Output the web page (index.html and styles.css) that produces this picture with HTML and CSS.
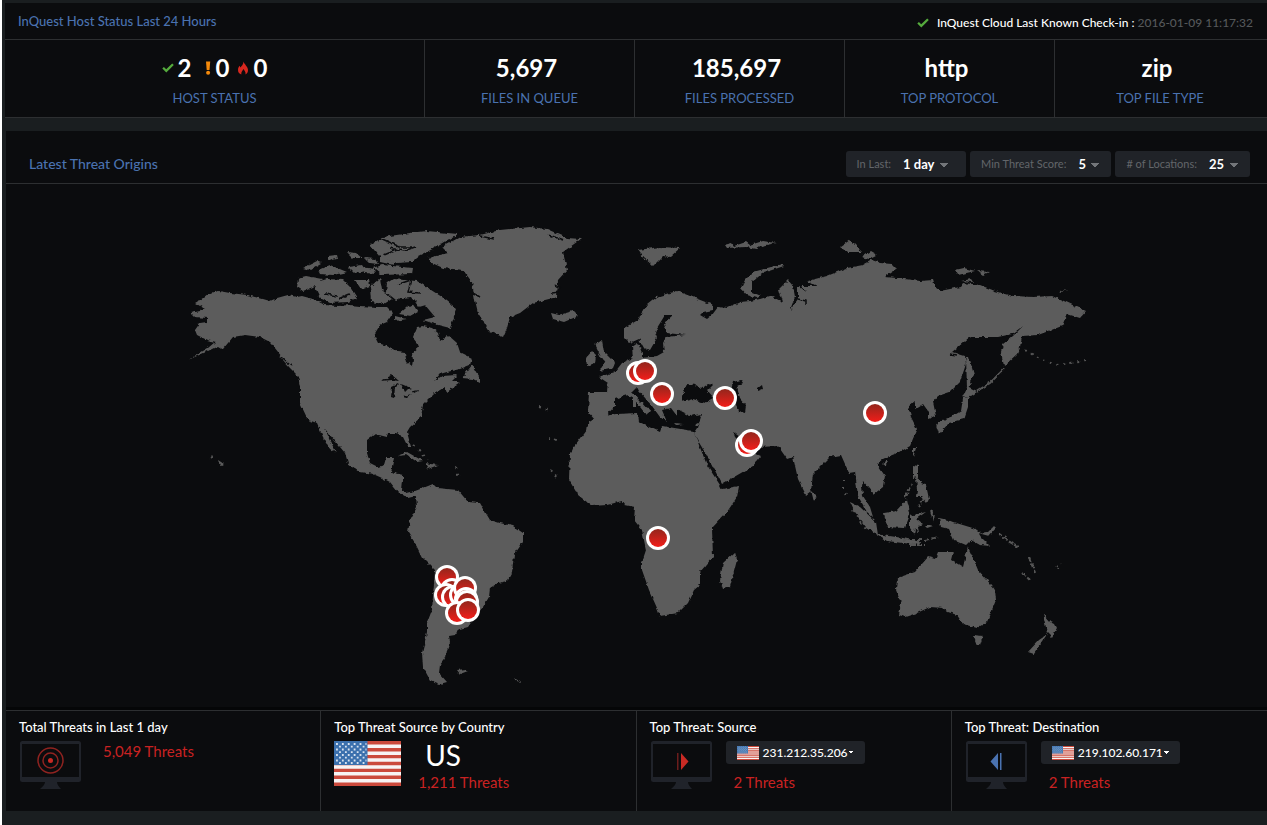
FILE: index.html
```html
<!DOCTYPE html>
<html lang="en">
<head>
<meta charset="utf-8">
<meta name="viewport" content="width=device-width, initial-scale=1">
<title>InQuest Threat Dashboard</title>
<link rel="stylesheet" href="styles.css">
</head>
<body>
<svg class="defs" width="0" height="0" aria-hidden="true">
  <defs>
    <symbol id="check" viewBox="0 0 12 10"><path d="M.3 5.6 1.9 4l2.3 2.2L10.2.4l1.6 1.5-7.5 7.6z" fill="#55ab3d"/></symbol>
    <symbol id="flag" viewBox="0 0 66 45">
      <path fill="#f7f4f4" d="M0 0h66v45H0z"/>
      <path fill="#cb4a3c" d="M0 0h66v3.5H0zM0 7h66v3.4H0zM0 13.9h66v3.4H0zM0 20.8h66v3.4H0zM0 27.7h66v3.4H0zM0 34.6h66V38H0zM0 41.5h66V45H0z"/>
      <path fill="#3b70ad" d="M0 0h33v24H0z"/>
      <path fill="none" stroke="#d7e2ef" stroke-width="1.8" stroke-dasharray="1.8 4" d="M2 3h30M2 8.500h30M2 14h30M2 19.500h30M5 5.700h26M5 11.200h26M5 16.700h26M5 22h26"/>
    </symbol>
    <symbol id="monitor" viewBox="0 0 61 49">
      <path fill="#20232a" fill-rule="evenodd" d="M2.500 0h56Q61 0 61 2.500v36q0 2.500-2.500 2.500H2.500Q0 41 0 38.500v-36Q0 0 2.500 0zM2 3v33h57V3zM25 41h12q0 3 4 7H20q5-4 5-7z"/>
    </symbol>
  </defs>
</svg>
<div class="app">
  <section class="status">
    <header class="status-head">
      <h1 class="heading heading-small">InQuest Host Status Last 24 Hours</h1>
      <p class="checkin"><svg class="checkin-icon" aria-hidden="true"><use href="#check"/></svg><span>InQuest Cloud Last Known Check-in : <time>2016-01-09 11:17:32</time></span></p>
    </header>
    <div class="stats">
      <div class="stat">
        <div class="stat-value hosts">
          <span class="host"><svg class="host-icon" viewBox="0 0 12 14" aria-hidden="true"><use href="#check" y="2" width="12" height="10"/></svg>2</span>
          <span class="host"><svg class="host-icon" viewBox="0 0 12 14" aria-hidden="true"><path fill="#f58a0b" d="M6 .5h4.200L9.500 9h-2.800z"/><circle cx="8.100" cy="11.800" r="2" fill="#f58a0b"/></svg>0</span>
          <span class="host"><svg class="host-icon" viewBox="0 0 12 14" aria-hidden="true"><path fill="#d8281f" d="M6.500.5C7 3 11 5.500 11 9c0 2.500-1.200 3.800-2.500 4.500C9 11 7.500 9.500 6.500 8 5.500 9.500 4 11 4.300 13.500 2.500 12.800 1 11.500 1 9c0-2 .8-3.200 1.700-4.200l.6 1.700C4.800 5 6.500 3 6.500.5z"/></svg>0</span>
        </div>
        <div class="stat-label">HOST STATUS</div>
      </div>
      <div class="stat"><div class="stat-value single">5,697</div><div class="stat-label">FILES IN QUEUE</div></div>
      <div class="stat"><div class="stat-value single">185,697</div><div class="stat-label">FILES PROCESSED</div></div>
      <div class="stat"><div class="stat-value single">http</div><div class="stat-label">TOP PROTOCOL</div></div>
      <div class="stat"><div class="stat-value single">zip</div><div class="stat-label">TOP FILE TYPE</div></div>
    </div>
  </section>

  <section class="origins">
    <header class="origins-head">
      <h2 class="heading">Latest Threat Origins</h2>
      <form class="filters">
        <div class="filter"><label for="period">In Last:</label><select id="period" class="pick pick-wide"><option>1 day</option></select></div>
        <div class="filter"><label for="score">Min Threat Score:</label><select id="score" class="pick"><option>5</option></select></div>
        <div class="filter"><label for="count"># of Locations:</label><select id="count" class="pick"><option>25</option></select></div>
      </form>
    </header>
    <svg class="map" viewBox="6 184 1261 523" role="img" aria-label="World map of threat origins">
      <defs>
        <linearGradient id="pin" x1="0" y1="0" x2="0" y2="1"><stop offset="0" stop-color="#93261c"/><stop offset="1" stop-color="#f21d19"/></linearGradient>
        <filter id="coast" filterUnits="userSpaceOnUse" x="180" y="220" width="920" height="475" color-interpolation-filters="sRGB">
          <feTurbulence type="fractalNoise" baseFrequency="0.22" numOctaves="2" seed="4"/>
          <feDisplacementMap in="SourceGraphic" scale="4" xChannelSelector="R" yChannelSelector="G"/>
        </filter>
        <g id="dot"><circle r="12" fill="#fff"/><circle r="9" fill="url(#pin)"/></g>
      </defs>
      <g filter="url(#coast)">
        <g fill="#5c5c5c">
          <path d="M188 360 208 348 215 342 207 340 197 335 195 330 200 323 207 322 207 318 195 317 191 313 200 311 205 309 195 303 203 298 209 293 219 291 230 293 247 295 263 299 270 301 277 298 288 295 297 297 302 296 313 299 325 305 338 306 350 305 360 306 377 307 387 307 393 313 387 322 380 325 374 335 378 343 387 346 397 352 405 353 407 362 412 366 413 360 412 353 419 347 417 342 413 337 417 327 423 326 432 328 438 333 440 341 448 335 457 343 460 352 472 358 470 365 460 369 447 372 440 374 434 381 442 376 457 375 452 380 460 383 447 392 445 387 435 393 428 400 423 405 421 417 410 427 407 432 411 447 408 447 403 437 397 433 388 433 387 437 375 434 367 440 367 453 370 463 378 467 384 465 386 458 394 458 391 472 403 475 403 480 402 490 407 493 415 491 423 488 433 484 437 488 458 490 468 502 480 503 487 515 490 520 500 523 513 526 523 533 523 542 514 555 512 572 507 581 498 583 490 588 489 597 483 607 475 617 468 627 457 630 455 635 449 636 450 642 447 650 446 657 440 665 439 673 447 682 440 684 430 680 423 667 422 653 427 633 427 623 432 610 435 570 422 557 415 543 408 532 410 520 417 507 416 496 408 498 398 492 390 482 382 478 373 474 360 472 348 463 345 453 325 429 336 453 330 449 323 437 317 423 308 420 300 403 300 387 298 376 290 368 280 357 270 342 260 337 245 335 233 337 228 343 223 349 218 346 206 352z"/>
          <path d="m313 283 14-4 16 1 7 7 7 11-10 4-17 1-10-5zM298 278l8-2 16 3-9 8-10 4-6-4zM303 268l14-7 5 2-12 7zM318 270l12-5 17 7-14 3-13-1zM328 256l8-1 1 4-9 2zM347 252l9 1 6 5-9 0zM348 267l14-2 4 6-12 2zM355 280l14 0 1 6-9 3zM365 258l10 1 3 5-8-1zM362 267l12 2 1 5-10-1z"/>
          <path d="m370 245 13-8 27-4 17-2 31 3-18 11-15 8-8 4-5 5-15 1-17-6zM374 268l8-3 31 3-1 6-30 1zM380 257l14 5 0 3-14-3zM370 287l10-9 2 12 10 9-8 5-13-2zM387 283l6-4 24 2 25 16 15 12-7 19-12-3-15-5 12-3-10-12-7 2-7-10-9 1-6 2-10-8zM395 316l12 3-12 2zM399 314l13-11 6 9-7 4z"/>
          <path d="m428 258 20-5-6-6 18-10 20-2 20-5 30-3 17 2 11 5 9 4 14 1-18 13 4 18-9 10-1 17-24 6-13 10-10 4-3 11-4 9-13-5-12-19-3-13-3-18-9-12-20-2-11-5zM551 313l8 2 14-4 5 5-14 6-11-3zM638 250l22-3 20 1-10 9-7-1-10 10-10-9zM595 345l7-5 2 12 11 11-2 5-13 3 5-8-4-6zM586 358l6-7 4 4-1 8-8 3z"/>
          <path d="m588 412 1-20 18 0 1-9-9-6 16-5 7-9 11-5-1-11 6-4 4 10 0 5 15-2 7-4-1-9 3-6 19-2-18-2-3-10 9-8-8 0-8 13-2 5 2 5-7 12-6-2-5-9-9 4-6-6 0-9 14-8 9-15 10-8 20-6 13 5 23 9 0 5-10 2-3 3 7 4 5-4 6-8 9 1 13-6 10-1 10-2 10-3 13 6-4-13 9-9 5 6 2 11-5 13 8-11 0-13 19 0-10-5 20-5 20-8 16-3 9-5 8 3 12 1 5 5-12 8 12 1 23 3 13-1 2 7 5 4 20-4 3-4 17 2 15 6 18 5 20 1 20-1 24 11 9 4-6 7-13-4-5 12-24 9-16 1-2 11-3 7-13 12-3-14 2-8 10-8 10-10-11 8-14 3-11 0-17 0-18 15 13 4 1 8-6 18-10 10-12 4-5 6 3 14-8 3 0-8-5-7-8 5 0-8-7 6 3 10 6 12-7 17-10 6-13 5-4 2-6 5 8 12-2 11-9 7-11-13-1 5 1 10 7 11 3 10-6-5-9-16-3-24-6 1-8-18-11 2-17 17-2 17-5 4-8-16-5-22-6 2-9-13-20 1-18-10-7-5 2 5 14 14 12 5-8 10-31 18-12-23-16-27 4-6 4-14-12 2-10-5-3-2 0 7-6-8-9 2 5 12-7-5-8-11-13-15-2-4-5 5 17 19-2 5-13-17-7-4-12 4 0 7-10 11-10 3z"/>
          <path d="m597 417 20-3 20-1 1 9 22 10 2-6 31 5 4 9 10 25 13 20 2 4 17-3-2 11-10 15-15 16 1 29-13 15 0 13-6 5-6 13-10 10-18 3-3-8-8-18-7-20 0-8 4-12-4-20-8-10 1-13-10-2-3-4-15 4-15 1-14-11-9-15 1-27 17-23 1-7zM735 552l2 8-7 27-7 2-3-9 3-17z"/>
          <path d="m741 288 4-8 8-8 29-8 2 2-21 7-11 9 0 10 9 4-4 2-10-3zM724 245l8-2 2 3 12-4 4 3 13-4 13 2-14 3-5 3-11-2-20 1zM840 247l10-7 12 12-15 0zM861 257l9-6 7 4-8 4zM955 270l9-2 11 3-17 4zM977 271l12 1-6 3zM961 281l10-2 2 3zM1059 291l10-1-8 2z"/>
          <path d="m966 357 3 0 5 18-4 6 1 4-4 3zM967 387l10 5-9 6-7-1 3-3zM963 398l5 0 0 9-4 12-15 4-10 11-3-9 2-3 15-6 8-5zM913 448l3 0-3 10zM883 463l5-3-1 6zM811 490l6 6-3 6zM913 465l5 1 0 11-5 1zM916 476l6 5-1 3 5 1 3 14-2 4-6-7-5 0 1-5z"/>
          <path d="m850 502 10 5 16 15 2 13-12-8-11-14zM876 534l27 4 18 4-1 3-33-4zM884 513l12-2 11-12 3 13-6 16-17-1zM910 516l16-4-10 7 6 5-4 2 1 8-4-6-1 7-4-6zM930 510l4 2-1 10zM939 518l9 2 5 2 23 7 5 8 9 9-10-1-9-5-5 5-12-5-5-11-8-2zM978 533l10-1 6-6 2 2-7 8zM925 526l8 0-6 2z"/>
          <path d="m968 547 5 11 5 12 9 10 8 10 1 10-9 22-10 6-14-4-6-9-9-3-5-4-13-1-13 6-12 4-6-2 2-12-5-13 1-12 18-6 13-15 7 2 3-7 15 0-2 8 12 7zM973 635l10 1-3 9-3 0zM1043 614l7 8 8 4-6 11-5-5zM1048 634l-14 20-6-2 11-12z"/>
          <path d="m397 456 10-4 16 9-6 1-10-7zM425 463l13 2-10 4zM462 378l10-13 7 12 0 5-6-3zM457 670l8-1 3 2-8 3zM633 395l3 0 0 12-3 0zM642 408l8 1-2 5zM674 423l9 1-7 1zM695 424l6-3-4 5zM218 460l6 4-4 2zM514 678l7 4-5-1z"/>
        </g>
        <g fill="none" stroke="#565656" stroke-width="2">
          <path d="m977 391 13-8 14-14"/>
          <path stroke-dasharray="2 5" d="m1025 350 13 8 18 7 30-4M998 533l10 8 10 6M1029 557l3 8 3 8M1023 574l7 6M1056 568l6-4M413 445l8 7 7 8M456 467l3 12M843 480l0 10 5 9M853 510l8 14 8 8M539 407l12 3M548 438l9 2M551 470l5 7M210 457l6 3"/>
          <path stroke-dasharray="5 2" d="m903 540 22 0 13-3M910 545l15 0M924 499l-6 8M905 497l4-7 3-6M998 533l12 9 8 5M1022 573l8 7M1029 557l6 16"/>
        </g>
        <g fill="#0b0c0e">
          <path d="m381 381 11-6 7 6-8-1zM391 397l1-10 8-4-5 5-1 10zM401 384l10 4-3 1-3 3zM403 396l9-2-7 4zM413 391l7-1-6 3zM682 396l5-12 8 1 6 4 7-5 4 1-5 5 7 8-9 5-12-4-11 3zM733 382l8-2 2 3-6 3 3 12 6 7-1 8-7-2-2-8-6-8zM758 388l4-3 1 4-5 2z"/>
        </g>
        <g fill="none" stroke="#0b0c0e" stroke-width="1.500">
          <path d="m380 238 20 9 12 0M390 248l14 3 11-4M384 255l12-5M399 284l12-4-3 12 12 1M400 298l9 8 7-4M325 294l12 2M338 299l12-5M563 240l-14-5M480 236l14 3M555 285l6 4M552 293l8-1M471 292l9 5M270 343l11 14 10 9M800 286l6 5M798 299l8 2 0 4M950 354l7 1"/>
        </g>
      </g>
      <g>
        <use href="#dot" x="638" y="373"/><use href="#dot" x="645" y="371"/><use href="#dot" x="662" y="394"/><use href="#dot" x="725" y="398"/>
        <use href="#dot" x="747" y="445"/><use href="#dot" x="751" y="441"/><use href="#dot" x="875" y="413"/><use href="#dot" x="658" y="538"/>
        <use href="#dot" x="447" y="577"/><use href="#dot" x="452" y="590"/><use href="#dot" x="446" y="595"/><use href="#dot" x="453" y="597"/>
        <use href="#dot" x="461" y="595"/><use href="#dot" x="465" y="588"/><use href="#dot" x="466" y="599"/><use href="#dot" x="467" y="602"/><use href="#dot" x="457" y="613"/><use href="#dot" x="468" y="610"/>
      </g>
    </svg>
    <div class="tiles">
      <article class="tile">
        <h3 class="tile-title">Total Threats in Last 1 day</h3>
        <div class="tile-body">
          <svg class="tile-icon" viewBox="0 0 61 49" aria-hidden="true"><use href="#monitor"/><g fill="none" stroke="#8f2320" stroke-width="1.500"><circle cx="30.500" cy="19.500" r="12.500"/><circle cx="30.500" cy="19.500" r="7.500"/></g><circle cx="30.500" cy="19.500" r="2.500" fill="#c92a24"/></svg>
          <div class="tile-info"><p class="threats">5,049 Threats</p></div>
        </div>
      </article>
      <article class="tile">
        <h3 class="tile-title">Top Threat Source by Country</h3>
        <div class="tile-body">
          <svg class="tile-flag" viewBox="0 0 66 45" preserveAspectRatio="none" aria-hidden="true"><use href="#flag"/></svg>
          <div class="tile-info country"><p class="code">US</p><p class="threats">1,211 Threats</p></div>
        </div>
      </article>
      <article class="tile">
        <h3 class="tile-title">Top Threat: Source</h3>
        <div class="tile-body">
          <svg class="tile-icon" viewBox="0 0 61 49" aria-hidden="true"><use href="#monitor"/><path fill="#6c1d1c" d="M26 12h1.500v17H26z"/><path fill="#c92a24" d="M30 12v17l7.500-8.500z"/></svg>
          <div class="tile-info address"><button type="button" class="ip"><svg class="ip-flag" viewBox="0 0 66 45" preserveAspectRatio="none" aria-hidden="true"><use href="#flag"/></svg>231.212.35.206<span class="caret"></span></button><p class="threats">2 Threats</p></div>
        </div>
      </article>
      <article class="tile">
        <h3 class="tile-title">Top Threat: Destination</h3>
        <div class="tile-body">
          <svg class="tile-icon" viewBox="0 0 61 49" aria-hidden="true"><use href="#monitor"/><path fill="#4a72b0" d="M34 12h1.500v17H34zM32 12v17l-7.500-8.500z"/></svg>
          <div class="tile-info address"><button type="button" class="ip"><svg class="ip-flag" viewBox="0 0 66 45" preserveAspectRatio="none" aria-hidden="true"><use href="#flag"/></svg>219.102.60.171<span class="caret"></span></button><p class="threats">2 Threats</p></div>
        </div>
      </article>
    </div>
  </section>
</div>
</body>
</html>
```

FILE: styles.css
```css
* { box-sizing: border-box; }
body { margin: 0; background: #1a1e20; color: #fff; font-family: Lato, "Open Sans", sans-serif; }
h1, h2, h3, p { margin: 0; }
.defs { display: block; }
.app { min-height: 100vh; padding: 3px 0 14px 3px; border-left: 2px solid #fff; background: #1a1e20; }

.heading { color: #4a72b0; font-size: 14px; line-height: 18px; font-weight: 500; }
.heading-small { font-size: 13px; }

.status { background: #0b0c0e; border-bottom: 1px solid #2d2f31; }
.status-head { display: flex; justify-content: space-between; align-items: center; height: 37px; padding: 0 14px 0 13px; border-bottom: 1px solid #2d2f31; }
.checkin { display: flex; align-items: center; gap: 8px; padding-top: 4px; font-size: 12px; line-height: 20px; font-weight: 500; }
.checkin time { color: #55585a; }
.checkin-icon { width: 12px; height: 10px; }

.stats { display: grid; grid-template-columns: 2fr 1fr 1fr 1fr 1fr; padding-right: 2px; }
.stat { padding: 12px 0 11px; text-align: center; border-right: 1px solid #2d2f31; }
.stat:last-child { border-right: 0; }
.stat-value { font-size: 24px; line-height: 32px; font-weight: 700; }
.single { padding-right: 6px; }
.stat-label { color: #4a72b0; font-size: 13px; line-height: 16px; margin-top: 6px; }
.hosts { display: flex; justify-content: center; gap: 8px; }
.host { display: flex; align-items: center; gap: 4px; }
.host-icon { width: 12px; height: 14px; }

.origins { margin: 13px 0 0 1px; background: #0b0c0e; }
.origins-head { display: flex; justify-content: space-between; align-items: center; height: 53px; padding: 13px 17px 0 23px; border-bottom: 1px solid #2d2f31; }
.filters { display: flex; gap: 4px; }
.filter { display: flex; align-items: center; gap: 12px; height: 26px; padding: 0 11px; border-radius: 3px; background: #202328; font-size: 11px; color: #63666a; }
.pick { appearance: none; padding: 0 14px 0 0; border: 0; color: #fff; font: 700 13px/20px Lato, "Open Sans", sans-serif; background: conic-gradient(from -45deg at 50% 100%, #73767a 90deg, transparent 0) right 1px top 9px / 8px 4px no-repeat; }
.pick-wide { margin-right: 6px; }
.map { display: block; width: 100%; height: auto; }

.tiles { display: grid; grid-template-columns: repeat(4, 1fr); border-top: 1px solid #2d2f31; box-shadow: 0 -3px #050607; margin-top: 3px; }
.tile { min-height: 100px; padding: 6px 13px 16px; border-right: 1px solid #2d2f31; }
.tile:last-child { border-right: 0; }
.tile-title { font-size: 13px; line-height: 20px; font-weight: 500; }
.tile-body { display: flex; align-items: flex-start; gap: 14px; padding-top: 4px; }
.tile-icon { flex: none; width: 61px; height: 49px; margin-left: 1px; }
.tile-flag { flex: none; width: 67px; height: 45px; }
.tile-info { padding-left: 8px; }
.threats { color: #c92222; font-size: 15px; line-height: 20px; }
.country { padding-left: 3px; }
.code { padding-left: 7px; font-size: 28px; line-height: 28px; margin-bottom: 3px; }
.address { padding-left: 0; }
.address .threats { padding: 8px 0 0 8px; }
.ip { display: flex; align-items: center; height: 23px; padding: 0 11px; border: 0; border-radius: 3px; background: #202328; color: #fff; font: 500 12px/20px Lato, "Open Sans", sans-serif; }
.ip-flag { width: 22px; height: 14px; margin-right: 4px; }
.caret { width: 6px; height: 3px; background: conic-gradient(from -45deg at 50% 100%, #fff 90deg, transparent 0); }
```
